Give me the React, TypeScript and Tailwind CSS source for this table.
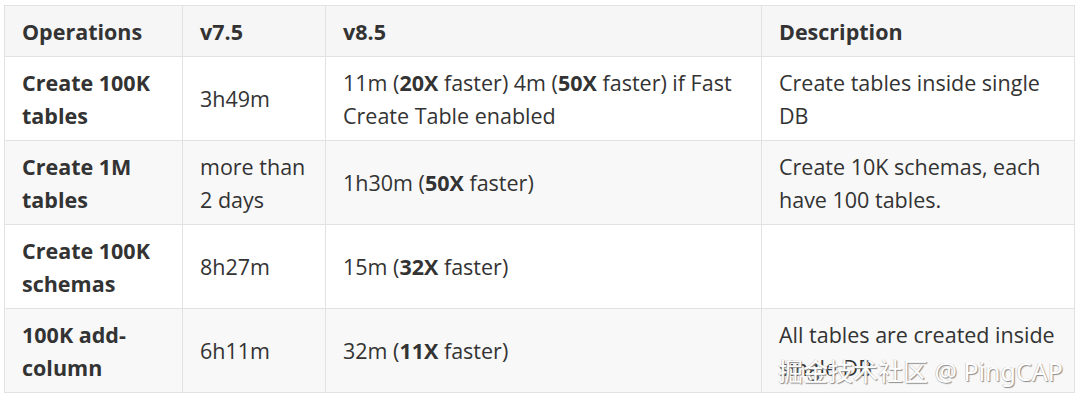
import React from 'react';

interface Row {
  op: string[];
  v75: React.ReactNode;
  v85: React.ReactNode;
  desc: React.ReactNode;
}

const rows: Row[] = [
  {
    op: ['Create 100K', 'tables'],
    v75: '3h49m',
    v85: (
      <>
        11m (<b>20X</b> faster) 4m (<b>50X</b> faster) if Fast Create Table enabled
      </>
    ),
    desc: 'Create tables inside single DB',
  },
  {
    op: ['Create 1M', 'tables'],
    v75: (
      <>
        more than
        <br />2 days
      </>
    ),
    v85: (
      <>
        1h30m (<b>50X</b> faster)
      </>
    ),
    desc: 'Create 10K schemas, each have 100 tables.',
  },
  {
    op: ['Create 100K', 'schemas'],
    v75: '8h27m',
    v85: (
      <>
        15m (<b>32X</b> faster)
      </>
    ),
    desc: '',
  },
  {
    op: ['100K add-', 'column'],
    v75: '6h11m',
    v85: (
      <>
        32m (<b>11X</b> faster)
      </>
    ),
    desc: 'All tables are created inside single DB',
  },
];

export default function App() {
  return (
    <div className="w-[1080px] h-[402px] bg-white pl-[4px] pt-[5px] font-['Open_Sans',sans-serif] text-[#333] relative">
      <table className="table-fixed border-collapse text-[21.5px] leading-[33px]">
        <colgroup>
          <col className="w-[178px]" />
          <col className="w-[143px]" />
          <col className="w-[436px]" />
          <col className="w-[313px]" />
        </colgroup>
        <thead>
          <tr className="bg-[#f6f6f6]">
            {['Operations', 'v7.5', 'v8.5', 'Description'].map((h) => (
              <th key={h} className="border border-[#e2e2e2] pl-[17px] pr-[14px] py-[8.5px] text-left font-bold">
                {h}
              </th>
            ))}
          </tr>
        </thead>
        <tbody>
          {rows.map((r, i) => (
            <tr key={i} className={i % 2 === 1 ? 'bg-[#f8f8f8]' : 'bg-white'}>
              <td className="border border-[#e2e2e2] pl-[17px] pr-[14px] py-[8.5px] font-bold">
                {r.op[0]}
                <br />
                {r.op[1]}
              </td>
              <td className="border border-[#e2e2e2] pl-[17px] pr-[14px] py-[8.5px]">{r.v75}</td>
              <td className="border border-[#e2e2e2] pl-[17px] pr-[14px] py-[8.5px]">{r.v85}</td>
              <td className="border border-[#e2e2e2] pl-[17px] pr-[14px] py-[8.5px]">{r.desc}</td>
            </tr>
          ))}
        </tbody>
      </table>

      {/* watermark */}
      <div className="absolute left-[778px] top-[354px] text-[25px] leading-[34px] text-white font-['Noto_Sans',_'Noto_Sans_CJK_SC',sans-serif] [text-shadow:1px_1px_1px_#8a8a8a,-0.5px_-0.5px_0_#bdbdbd] whitespace-nowrap">
        掘金技术社区 @ PingCAP
      </div>
    </div>
  );
}
